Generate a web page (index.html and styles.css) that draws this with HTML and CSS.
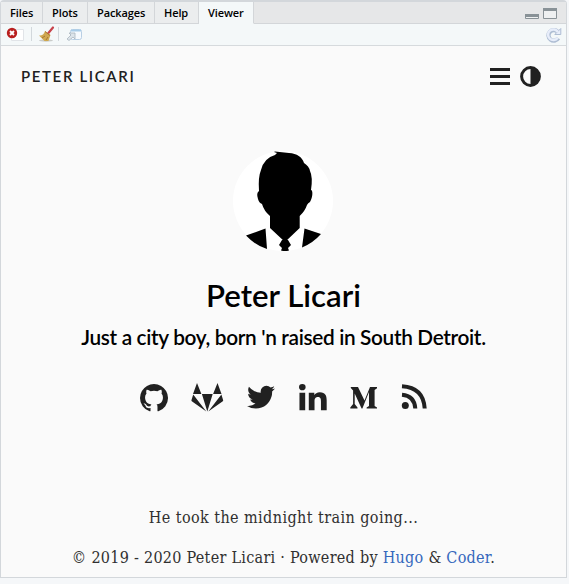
FILE: index.html
```html
<!DOCTYPE html>
<html lang="en">
<head>
<meta charset="utf-8">
<title>Peter Licari</title>
<link rel="stylesheet" href="styles.css">
</head>
<body>
<div class="pane">
  <div class="tabs">
    <div class="tab files">Files</div>
    <div class="tab plots">Plots</div>
    <div class="tab packages">Packages</div>
    <div class="tab help">Help</div>
    <div class="tab viewer active">Viewer</div>
    <div class="tab-space">
      <svg width="34" height="14" viewBox="0 0 34 14"><path d="M.5 8.500h13v4H.5z" fill="#eef0f1" stroke="#899297"/><path d="M0 8h14v3H0z" fill="#899297"/><path d="M18.500 2.500h13v10h-13z" fill="#eef0f1" stroke="#899297"/><path d="M18 2h14v3H18z" fill="#899297"/></svg>
    </div>
  </div>
  <div class="toolbar">
    <svg width="90" height="20" viewBox="0 0 90 20">
      <path d="M10.500 4.500h12v11h-12z" fill="#fff" stroke="#e1e4e8"/>
      <circle cx="11" cy="8" r="5.200" fill="#b9201f"/><path d="M9 6l4 4M13 6l-4 4" stroke="#fff" stroke-width="1.900"/>
      <path d="M30.500 2v14M57.500 2v14" stroke="#d2d8dc"/>
      <path d="M47 8.500l5-6" stroke="#c8434b" stroke-width="2.200" stroke-linecap="round"/>
      <ellipse cx="45" cy="15.500" rx="7" ry="1.200" fill="#c9cbc9"/>
      <path d="M44 6l5.500 4-2 6h-4L38 10.500q4.500.5 6-4.500z" fill="#cfa850"/>
      <path d="M44 6.500l5 4M44 11l-3 2M47 12l-2 3" stroke="#a87632"/>
      <rect x="69.500" y="4.500" width="11" height="10" rx="2" fill="#f6fafe" stroke="#b8cfe4"/><path d="M70 5.500h10" stroke="#a8cce8" stroke-width="2"/>
      <path d="M66 14l4-4-2-2h6v6l-2-2-4 3.500z" fill="#dce4ea" stroke="#aab5bf" stroke-width=".8"/>
    </svg>
    <svg width="18" height="18" viewBox="0 0 18 18"><g transform="translate(1 1)"><path d="M13.300 12.200A5.300 5.300 0 1 1 12.700 5.800" fill="none" stroke="#aebdd3" stroke-width="4.300"/><path d="M15.800 2.500v6H9.800z" fill="#e7edfa" stroke="#aebdd3"/><path d="M12.700 11.800A5.300 5.300 0 1 1 12.900 6" fill="none" stroke="#e7edfa" stroke-width="2.500"/></g></svg>
  </div>
  <main class="page">
    <header class="nav">
      <span class="brand">PETER LICARI</span>
      <svg class="nav-icons" width="52" height="22" viewBox="0 0 52 22"><path d="M1 3.500h20M1 10.500h20M1 17.500h20" stroke="#212121" stroke-width="3"/><circle cx="41.500" cy="10.500" r="8.900" fill="none" stroke="#212121" stroke-width="3"/><path d="M41.500 1a9.500 9.500 0 0 1 0 19z" fill="#212121"/></svg>
    </header>
    <svg class="avatar" width="100" height="100" viewBox="0 0 100 100">
      <circle cx="50" cy="50" r="50" fill="#fff"/>
      <path d="M42 4l2-2-3-1 1-.5 14 1.500c8 .5 13 4 15 10q5 3 6 8 3 6 1 19c2 0 2 7-1 12q-2 1-3 3-2 6-7.300 11V77L52 91 37 77V65q-6-5-8-12-3-1-4-5-2-6 1-8-1-14 2-21 3-12 14-15z"/>
      <path d="M13 84.500l19.500-7L34 98q-11-3-21-13.500zM71.500 77.500l16.500 5.500q-8 9-19 13.500zM49 89h6l3 5-3 3 1 2.500q-4 1-8 0l1-2.500-3-3z"/>
    </svg>
    <h1>Peter Licari</h1>
    <h2>Just a city boy, born 'n raised in South Detroit.</h2>
    <div class="social">
      <svg width="28" height="30" viewBox="0 0 28 30"><path transform="translate(0 -1.300) scale(.01823)" d="M768 128q209 0 385.500 103t279.500 279.500 103 385.500q0 251-146.500 451.500t-378.500 277.500q-27 5-40-7t-13-30q0-3 .5-76.500t.5-134.500q0-97-52-142 57-6 102.500-18t94-39 81-66.500 53-105 20.500-150.500q0-119-79-206 37-91-8-204-28-9-81 11t-92 44l-38 24q-93-26-192-26t-192 26q-16-11-42.500-27t-83.500-38.500-85-13.500q-45 113-8 204-79 87-79 206 0 85 20.500 150t52.500 105 80.500 67 94 39 102.500 18q-39 36-49 103-21 10-45 15t-57 5-65.500-21.500-55.500-62.500q-19-32-48.500-52t-49.500-24l-20-3q-21 0-29 4.500t-5 11.500 9 14 13 12l7 5q22 10 43.500 38t31.500 51l10 23q13 38 44 61.500t67 30 69.500 7 55.500-3.500l23-4q0 38 .5 88.500t.5 54.500q0 18-13 30t-40 7q-232-77-378.500-277.500t-146.500-451.500q0-209 103-385.500t279.500-279.500 385.500-103z"/></svg>
      <svg width="33" height="30" viewBox="0 0 33 30"><path d="M6 0l4.400 11H2zM26.500 0l4 11h-8.400zM10.900 11h10.800L16.300 28.500zM2.200 11.500L15.300 28.500.8 18.200q-.6-.4-.3-1.200zM30.400 11.500L17.300 28.500l14.500-10.300q.6-.4.300-1.200z"/></svg>
      <svg width="28" height="30" viewBox="0 0 28 30"><path transform="translate(-1.900 -1.800) scale(.01775)" d="M1684 408q-67 98-162 167 1 14 1 42 0 130-38 259.500t-115.500 248.500-184.500 210.500-258 146-323 54.500q-271 0-496-145 35 4 78 4 225 0 401-138-105-2-188-64.500t-114-159.500q33 5 61 5 43 0 85-11-112-23-185.500-111.500t-73.500-205.500v-4q68 38 146 41-66-44-105-115t-39-154q0-88 44-163 121 149 294.500 238.500t371.500 99.500q-8-38-8-74 0-134 94.500-228.500t228.500-94.500q140 0 236 102 109-21 205-78-37 115-142 178 93-10 186-50z"/></svg>
      <svg width="28" height="30" viewBox="0 0 28 30"><path transform="translate(0 1) scale(.0618 .0585)" d="M100.280 448H7.400V148.900h92.880zM53.790 108.100C24.090 108.100 0 83.500 0 53.800a53.790 53.790 0 0 1 107.580 0c0 29.700-24.100 54.300-53.790 54.300zM447.900 448h-92.680V302.400c0-34.700-.7-79.200-48.290-79.200-48.290 0-55.690 37.700-55.690 76.700V448h-92.780V148.900h89.080v40.800h1.300c12.400-23.500 42.690-48.300 87.880-48.300 94 0 111.280 61.900 111.280 142.300V448z"/></svg>
      <svg width="28" height="30" viewBox="0 0 28 30"><path d="M.8 4H8l6.500 13.500L20 4h7v1.200L24.600 7v16l2.400 1.500v1H16.600v-1L19 23V9l-6.600 16.500h-.8L4.700 10.500V21l2.800 3.500v1H.3v-1L3.100 21V7.500L.8 5z"/></svg>
      <svg width="26" height="30" viewBox="0 0 26 30"><circle cx="4.300" cy="22.500" r="3.500"/><path d="M1 11.700q12.500 1 13.300 13.800M1 3.200Q22.500 4.500 23.700 25.500" fill="none" stroke="#212121" stroke-width="4"/></svg>
    </div>
    <footer>
      <p class="line-one">He took the midnight train going...</p>
      <p class="line-two">© 2019 - 2020 Peter Licari · Powered by <a>Hugo</a> &amp; <a>Coder</a>.</p>
    </footer>
  </main>
</div>
</body>
</html>
```
FILE: styles.css
```css
* { box-sizing: border-box; }
body { margin: 0; background: #f5f7f9; }
svg { display: block; flex: none; }
.pane { width: 567px; height: 578px; border: 1px solid #d3d7db; border-top-width: 2px; border-radius: 4px 4px 0 0; background: #fafafa; }
.tabs { display: flex; height: 22px; font: 600 11px/21px "Open Sans", sans-serif; letter-spacing: -0.1px; color: #000; }
.tab { border-right: 1px solid #d3d6d9; border-bottom: 1px solid #d3d6d9; background: #ebedee; padding-left: 9px; white-space: nowrap; }
.files { width: 42px; }
.plots { width: 45px; }
.packages { width: 67px; }
.help { width: 44px; }
.viewer { width: 55px; }
.tab.active { background: #f4f8f9; border-bottom-color: #f4f8f9; }
.tab-space { flex: 1; display: flex; justify-content: flex-end; padding: 4px 7px 0 0; background: #e6e7e8; border-bottom: 1px solid #d3d6d9; }
.toolbar { height: 22px; display: flex; justify-content: space-between; padding: 1px 4px 0 0; background: #f4f8f9; border-bottom: 1px solid #d6dadd; }
.page { display: flex; flex-direction: column; align-items: center; height: 531px; background: #fafafa; color: #000; font-family: Lato, sans-serif; }
.nav { align-self: stretch; display: flex; justify-content: space-between; padding: 20px 25px 0 20px; height: 105px; flex: none; }
.brand { font-size: 15px; line-height: 20px; font-weight: 600; letter-spacing: 1.63px; color: #212121; }
.avatar { margin-right: 2px; }
h1 { margin: 26px 0 0; font-size: 31.2px; line-height: 36px; font-weight: 600; }
h2 { margin: 12px 0 0; font-size: 20.8px; line-height: 24px; font-weight: 600; letter-spacing: -0.34px; white-space: nowrap; }
.social { width: 287px; margin-top: 34px; display: flex; justify-content: space-between; fill: #212121; }
footer { margin-top: 93px; font: 16px/24px "DejaVu Serif Condensed", "DejaVu Serif", serif; letter-spacing: 0.28px; color: #303030; }
.line-one { letter-spacing: 0.42px; }
footer p { margin: 0 0 16px; text-align: center; white-space: nowrap; }
a { color: #3568bd; }
```
